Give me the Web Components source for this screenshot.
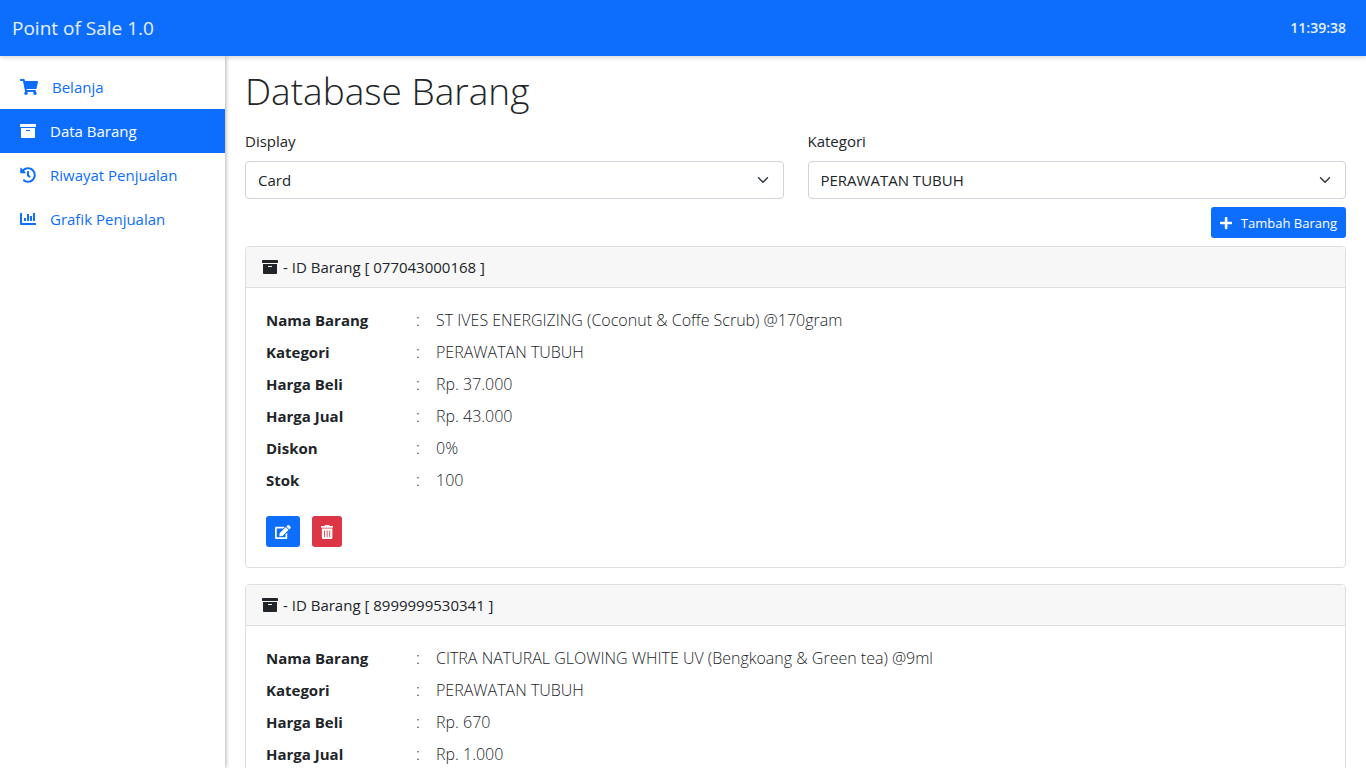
<!DOCTYPE html>
<html lang="id">
<head>
<meta charset="utf-8">
<meta name="viewport" content="width=device-width, initial-scale=1">
<title>Point of Sale</title>
<style>
html, body { margin: 0; height: 100%; }
body { font: 400 15px/24px "Open Sans", "Noto Sans", sans-serif; color: #212529; background: #fff; }
</style>
</head>
<body>
<pos-app></pos-app>
<script>
const ICONS = {
  cart: [576, 'M528.12 301.319l47.273-208C578.806 78.301 567.391 64 551.99 64H159.208l-9.166-44.81C147.758 8.021 137.93 0 126.529 0H24C10.745 0 0 10.745 0 24v16c0 13.255 10.745 24 24 24h69.883l70.248 343.435C147.325 417.1 136 435.222 136 456c0 30.928 25.072 56 56 56s56-25.072 56-56c0-15.674-6.447-29.835-16.824-40h209.647C430.447 426.165 424 440.326 424 456c0 30.928 25.072 56 56 56s56-25.072 56-56c0-22.172-12.888-41.332-31.579-50.405l5.517-24.276c3.413-15.018-8.002-29.319-23.403-29.319H218.117l-6.545-32h293.145c11.206 0 20.92-7.754 23.403-18.681z'],
  archive: [512, 'M32 448c0 17.7 14.3 32 32 32h384c17.7 0 32-14.3 32-32V160H32v288zm160-212c0-6.6 5.4-12 12-12h104c6.6 0 12 5.4 12 12v8c0 6.6-5.4 12-12 12H204c-6.6 0-12-5.4-12-12v-8zM480 32H32C14.3 32 0 46.3 0 64v48c0 8.8 7.2 16 16 16h480c8.8 0 16-7.2 16-16V64c0-17.7-14.3-32-32-32z'],
  history: [512, 'M504 255.531c.253 136.64-111.18 248.372-247.82 248.468-59.015.042-113.223-20.53-155.822-54.911-11.077-8.94-11.905-25.541-1.839-35.607l11.267-11.267c8.609-8.609 22.353-9.551 31.891-1.984C173.062 425.135 212.781 440 256 440c101.705 0 184-82.311 184-184 0-101.705-82.311-184-184-184-48.814 0-93.149 18.969-126.068 49.932l50.754 50.754c10.08 10.08 2.941 27.314-11.313 27.314H24c-8.837 0-16-7.163-16-16V38.627c0-14.254 17.234-21.393 27.314-11.314l49.372 49.372C129.209 34.136 189.552 8 256 8c136.81 0 247.747 110.78 248 247.531zm-180.912 78.784l9.823-12.63c8.138-10.463 6.253-25.542-4.21-33.679L288 256.349V152c0-13.255-10.745-24-24-24h-16c-13.255 0-24 10.745-24 24v135.651l65.409 50.874c10.463 8.137 25.541 6.253 33.679-4.21z'],
  chart: [512, 'M332.8 320h38.4c6.4 0 12.8-6.4 12.8-12.8V172.8c0-6.4-6.4-12.8-12.8-12.8h-38.4c-6.4 0-12.8 6.4-12.8 12.8v134.4c0 6.4 6.4 12.8 12.8 12.8zm96 0h38.4c6.4 0 12.8-6.4 12.8-12.8V76.8c0-6.4-6.4-12.8-12.8-12.8h-38.4c-6.4 0-12.8 6.4-12.8 12.8v230.4c0 6.4 6.4 12.8 12.8 12.8zm-288 0h38.4c6.4 0 12.8-6.4 12.8-12.8v-70.4c0-6.4-6.4-12.8-12.8-12.8h-38.4c-6.4 0-12.8 6.4-12.8 12.8v70.4c0 6.4 6.4 12.8 12.8 12.8zm96 0h38.4c6.4 0 12.8-6.4 12.8-12.8V108.8c0-6.4-6.4-12.8-12.8-12.8h-38.4c-6.4 0-12.8 6.4-12.8 12.8v198.4c0 6.4 6.4 12.8 12.8 12.8zM496 384H64V80c0-8.84-7.16-16-16-16H16C7.16 64 0 71.16 0 80v336c0 17.67 14.33 32 32 32h464c8.84 0 16-7.16 16-16v-32c0-8.84-7.16-16-16-16z'],
  plus: [448, 'M416 208H272V64c0-17.67-14.33-32-32-32h-32c-17.67 0-32 14.33-32 32v144H32c-17.67 0-32 14.33-32 32v32c0 17.67 14.33 32 32 32h144v144c0 17.67 14.33 32 32 32h32c17.67 0 32-14.33 32-32V304h144c17.67 0 32-14.33 32-32v-32c0-17.67-14.33-32-32-32z'],
  edit: [576, 'M402.6 83.2l90.2 90.2c3.8 3.8 3.8 10 0 13.8L274.4 405.6l-92.8 10.3c-12.4 1.4-22.9-9.1-21.5-21.5l10.3-92.8L388.8 83.2c3.8-3.8 10-3.8 13.8 0zm162-22.9l-48.8-48.8c-15.2-15.2-39.9-15.2-55.2 0l-35.4 35.4c-3.8 3.8-3.8 10 0 13.8l90.2 90.2c3.8 3.8 10 3.8 13.8 0l35.4-35.4c15.2-15.3 15.2-40 0-55.2zM384 346.2V448H64V128h229.8c3.2 0 6.2-1.3 8.5-3.5l40-40c7.6-7.6 2.2-20.5-8.5-20.5H48C21.5 64 0 85.5 0 112v352c0 26.5 21.5 48 48 48h352c26.5 0 48-21.5 48-48V306.2c0-10.7-12.9-16-20.5-8.5l-40 40c-2.2 2.3-3.5 5.3-3.5 8.5z'],
  trash: [448, 'M32 464a48 48 0 0 0 48 48h288a48 48 0 0 0 48-48V128H32zm272-256a16 16 0 0 1 32 0v224a16 16 0 0 1-32 0zm-96 0a16 16 0 0 1 32 0v224a16 16 0 0 1-32 0zm-96 0a16 16 0 0 1 32 0v224a16 16 0 0 1-32 0zM432 32H312l-9.4-18.7A24 24 0 0 0 281.1 0H166.8a23.72 23.72 0 0 0-21.4 13.3L136 32H16A16 16 0 0 0 0 48v32a16 16 0 0 0 16 16h416a16 16 0 0 0 16-16V48a16 16 0 0 0-16-16z']
};

class PosElement extends HTMLElement {
  connectedCallback() {
    if (!this.shadowRoot) this.attachShadow({ mode: 'open' }).innerHTML = this.view();
  }
}

customElements.define('pos-icon', class extends PosElement {
  view() {
    const [w, d] = ICONS[this.getAttribute('name')];
    return `<style>:host{display:block;flex:none;height:16px}svg{display:block;height:100%;fill:currentColor}</style>
      <svg viewBox="0 0 ${w} 512" aria-hidden="true"><path d="${d}"/></svg>`;
  }
});

customElements.define('pos-header', class extends PosElement {
  view() {
    return `<style>
      :host{display:flex;align-items:center;justify-content:space-between;box-sizing:border-box;height:56px;padding:0 20px 0 12px;background:#0d6efd;color:#e7f1ff;box-shadow:0 2px 4px rgba(0,0,0,.15);position:relative;z-index:2}
      a{font-size:19px;line-height:28px;font-weight:500;color:inherit;text-decoration:none}
      time{font-weight:600;font-size:14px}
      </style><a href="#"><slot></slot></a><time>11:39:38</time>`;
  }
});

customElements.define('pos-nav-item', class extends PosElement {
  view() {
    return `<style>
      :host{display:block;color:#0d6efd}
      :host([active]){background:#0d6efd;color:#fff}
      a{display:flex;align-items:center;gap:14px;padding:10px 20px;color:inherit;text-decoration:none}
      </style><a href="#"><pos-icon name="${this.getAttribute('icon')}"></pos-icon><span><slot></slot></span></a>`;
  }
});

customElements.define('pos-sidebar', class extends PosElement {
  view() {
    return `<style>
      :host{display:block;box-sizing:border-box;padding-top:9px;background:#fff;box-shadow:1px 0 4px rgba(0,0,0,.3)}
      </style><nav>
      <pos-nav-item icon="cart">Belanja</pos-nav-item>
      <pos-nav-item icon="archive" active>Data Barang</pos-nav-item>
      <pos-nav-item icon="history">Riwayat Penjualan</pos-nav-item>
      <pos-nav-item icon="chart">Grafik Penjualan</pos-nav-item></nav>`;
  }
});

customElements.define('pos-select', class extends PosElement {
  view() {
    const options = this.getAttribute('options').split('|').map(o => `<option>${o}</option>`).join('');
    return `<style>
      :host{display:block;min-width:0}
      label{display:block;margin-bottom:8px}
      select{appearance:none;display:block;box-sizing:border-box;width:100%;height:38px;padding:0 36px 0 12px;border:1px solid #ced4da;border-radius:4px;font:inherit;color:inherit;
        background:#fff url("data:image/svg+xml,%3Csvg xmlns='http://www.w3.org/2000/svg' viewBox='0 0 16 16'%3E%3Cpath fill='none' stroke='%23343a40' stroke-linecap='round' stroke-linejoin='round' stroke-width='2' d='M2 5l6 6 6-6'/%3E%3C/svg%3E") no-repeat right 12px center/16px 12px}
      </style><label for="field">${this.getAttribute('label')}</label><select id="field">${options}</select>`;
  }
});

customElements.define('pos-button', class extends PosElement {
  view() {
    const label = this.getAttribute('label');
    return `<style>
      :host{display:block}
      button{display:flex;align-items:center;gap:9px;height:31px;padding:0 9px;border:0;border-radius:3px;background:#0d6efd;color:#fff;font:inherit;font-size:13px}
      :host([danger]) button{background:#dc3545}
      pos-icon{height:14px}
      </style><button type="button"${label ? ` aria-label="${label}"` : ''}><pos-icon name="${this.getAttribute('icon')}"></pos-icon><slot></slot></button>`;
  }
});

customElements.define('pos-card', class extends PosElement {
  view() {
    const rows = [['Nama Barang', 'nama'], ['Kategori', 'kategori'], ['Harga Beli', 'beli'], ['Harga Jual', 'jual'], ['Diskon', 'diskon'], ['Stok', 'stok']]
      .map(([label, key]) => `<tr><th scope="row">${label}</th><td class="colon">:</td><td>${this.getAttribute(key).replace('&', '&amp;')}</td></tr>`).join('');
    return `<style>
      :host{display:block;border:1px solid #dfdfdf;border-radius:4px;overflow:hidden}
      header{display:flex;align-items:center;gap:5px;padding:8px 16px;background:#f7f7f7;border-bottom:1px solid #dfdfdf}
      table{width:100%;border-collapse:collapse;table-layout:fixed}
      th,td{padding:4px;text-align:left}
      th{box-sizing:border-box;width:150px;font-weight:700}
      td{font-size:16px;font-weight:300}
      .colon{box-sizing:border-box;width:20px}
      .body{padding:16px}
      .actions{display:flex;gap:12px;padding:20px 4px 4px}
      </style>
      <header><pos-icon name="archive"></pos-icon><span>- ID Barang [ ${this.getAttribute('code')} ]</span></header>
      <div class="body"><table>${rows}</table>
      <div class="actions"><pos-button icon="edit" label="Edit barang"></pos-button><pos-button icon="trash" label="Hapus barang" danger></pos-button></div></div>`;
  }
});

customElements.define('pos-app', class extends PosElement {
  view() {
    return `<style>
      :host{display:flex;flex-direction:column;height:100vh;overflow:hidden}
      .layout{flex:1;min-height:0;display:grid;grid-template-columns:225px minmax(0,1fr)}
      main{overflow-y:auto;scrollbar-width:none;padding:8px 20px 0}
      h1{margin:0 0 12px;font-size:37px;line-height:53px;font-weight:300}
      .filters{display:grid;grid-template-columns:1fr 1fr;gap:24px}
      .toolbar{display:flex;justify-content:flex-end;padding:8px 0}
      .cards{display:grid;gap:16px}
      </style>
      <pos-header>Point of Sale 1.0</pos-header>
      <div class="layout">
        <pos-sidebar></pos-sidebar>
        <main>
          <h1>Database Barang</h1>
          <div class="filters">
            <pos-select label="Display" options="Card|Table"></pos-select>
            <pos-select label="Kategori" options="PERAWATAN TUBUH"></pos-select>
          </div>
          <div class="toolbar"><pos-button icon="plus">Tambah Barang</pos-button></div>
          <div class="cards">
            <pos-card code="077043000168" nama="ST IVES ENERGIZING (Coconut &amp; Coffe Scrub) @170gram" kategori="PERAWATAN TUBUH" beli="Rp. 37.000" jual="Rp. 43.000" diskon="0%" stok="100"></pos-card>
            <pos-card code="8999999530341" nama="CITRA NATURAL GLOWING WHITE UV (Bengkoang &amp; Green tea) @9ml" kategori="PERAWATAN TUBUH" beli="Rp. 670" jual="Rp. 1.000" diskon="0%" stok="100"></pos-card>
          </div>
        </main>
      </div>`;
  }
});
</script>
</body>
</html>
